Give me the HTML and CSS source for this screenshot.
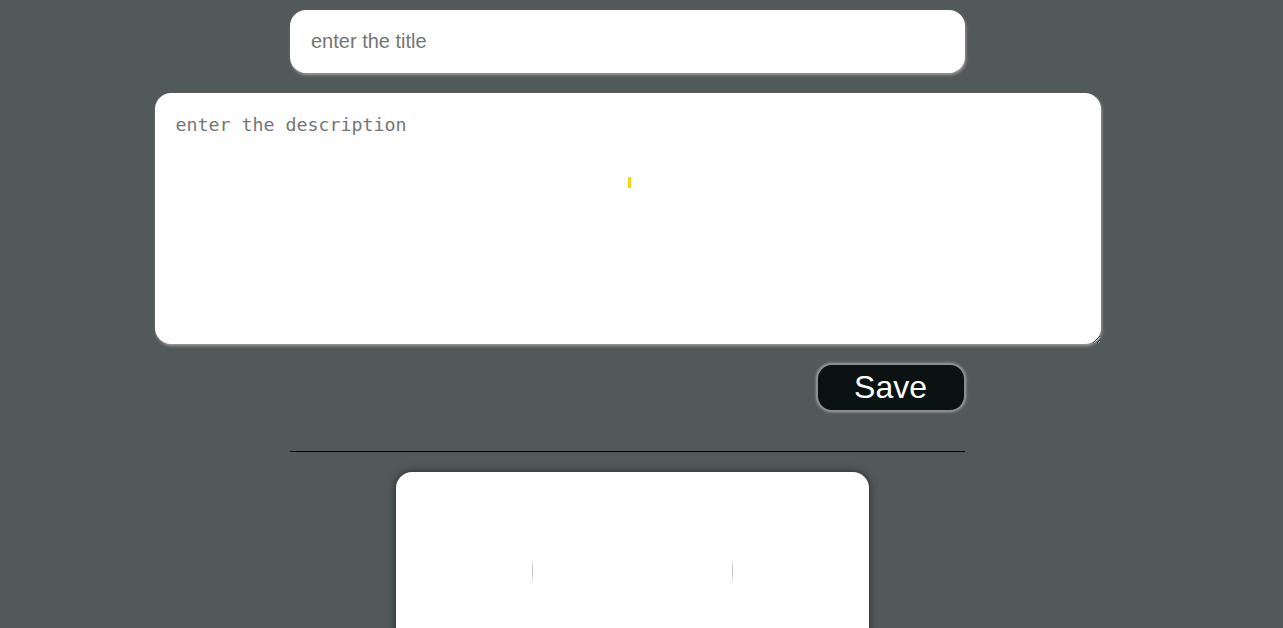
FILE: index.html
```html
<!DOCTYPE html>
<html>
<head>
<meta charset="utf-8">
<link rel="stylesheet" href="styles.css">
</head>
<body>
<div class="page">
  <input class="title-input" type="text" placeholder="enter the title">
  <div class="desc-wrap">
    <textarea class="desc-input" placeholder="enter the description"></textarea>
    <span class="caret-mark"></span>
  </div>
  <div class="actions">
    <button class="save-btn">Save</button>
  </div>
  <hr class="divider">
  <div class="card">
    <div class="card-row">
      <span class="vline"></span>
      <span class="vline"></span>
    </div>
  </div>
</div>
</body>
</html>
```
FILE: styles.css
```css
html, body {
  margin: 0;
  padding: 0;
  background: #525a59;
  overflow: hidden;
  height: 628px;
}
.page {
  width: 1255px;
  height: 628px;
  overflow: hidden;
  padding-top: 10px;
  box-sizing: border-box;
  display: flex;
  flex-direction: column;
  align-items: center;
}
.title-input {
  box-sizing: border-box;
  flex: none;
  width: 675px;
  height: 63px;
  border: none;
  border-radius: 16px;
  background: #fff;
  padding: 0 21px;
  font-family: "Liberation Sans", Arial, sans-serif;
  font-size: 20px;
  color: #333;
  outline: none;
  box-shadow: 1px 2px 3px #9a9a9a;
}
.title-input::placeholder { color: #757575; }
.desc-wrap {
  position: relative;
  flex: none;
  margin-top: 20px;
  width: 946px;
  height: 251px;
}
.desc-input {
  box-sizing: border-box;
  display: block;
  width: 946px;
  height: 251px;
  border: none;
  border-radius: 16px;
  background: #fff;
  padding: 21px 20px 20px 21px;
  font-family: "DejaVu Sans Mono", monospace;
  font-size: 18.3px;
  line-height: 22px;
  color: #333;
  outline: none;
  resize: both;
  box-shadow: 1px 2px 3px #9a9a9a;
}
.desc-input::placeholder { color: #757575; }
.caret-mark {
  position: absolute;
  left: 473px;
  top: 84px;
  width: 3px;
  height: 11px;
  background: #f5d90a;
}
.actions {
  flex: none;
  width: 676px;
  display: flex;
  justify-content: flex-end;
  margin-top: 19px;
}
.save-btn {
  box-sizing: border-box;
  width: 150px;
  height: 49px;
  border: 2px solid #8a8f8e;
  border-radius: 16px;
  background: #0b1212;
  color: #fff;
  font-family: "Liberation Sans", Arial, sans-serif;
  font-size: 32px;
  padding: 0;
  box-shadow: 0 0 3px #9aa09f;
}
.divider {
  flex: none;
  width: 675px;
  margin: 39px 0 0 0;
  border: none;
  border-top: 1px solid #000;
  height: 0;
}
.card {
  flex: none;
  margin-top: 20px;
  margin-left: 10px;
  width: 473px;
  height: 200px;
  background: #fff;
  border-radius: 16px;
  box-shadow: 0 0 8px rgba(0,0,0,0.55);
  display: flex;
  flex-direction: column;
}
.card-row {
  margin-top: 86px;
  display: flex;
  justify-content: space-between;
  padding: 0 136px;
}
.vline {
  width: 1px;
  height: 27px;
  background: linear-gradient(#fff, #bdbdbd 50%, #fff);
}
```
